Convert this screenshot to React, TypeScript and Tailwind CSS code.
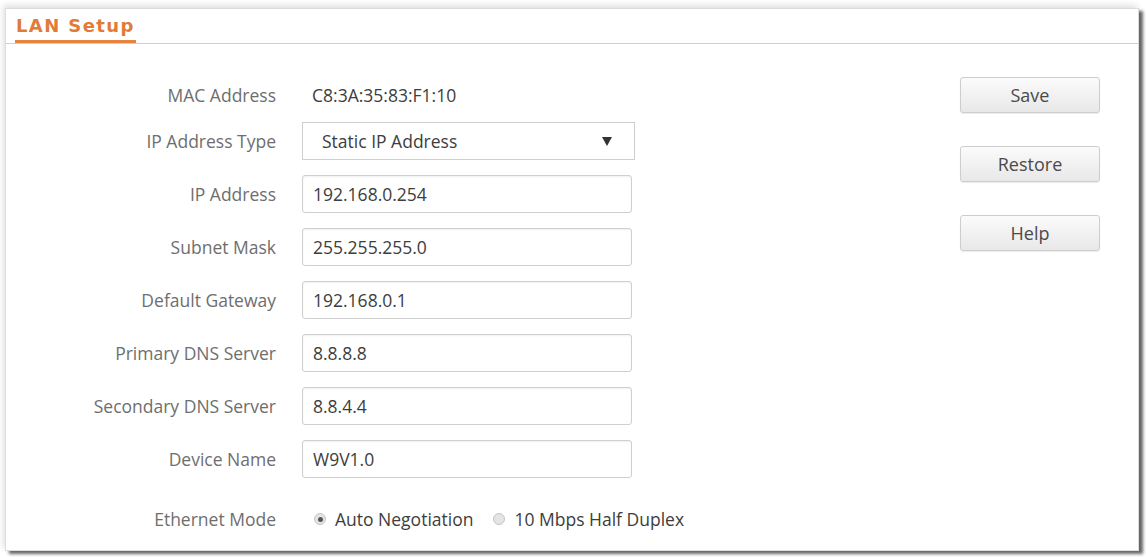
import React from "react";

const font = { fontFamily: '"Open Sans", "Liberation Sans", Arial, sans-serif' };

function Label({ children }: { children: React.ReactNode }) {
  return (
    <div className="w-[270px] shrink-0 text-right text-[17.5px] text-[#6e6e6e]">{children}</div>
  );
}

function InputRow({ label, value }: { label: string; value: string }) {
  return (
    <div className="flex items-center h-[38px] gap-x-[26px]">
      <Label>{label}</Label>
      <div className="w-[330px] h-[38px] border border-[#cfcfcf] rounded-[3px] bg-white flex items-center px-[10px] text-[17.5px] text-[#3d3d3d] shadow-[inset_0_1px_2px_rgba(0,0,0,0.06)]">
        {value}
      </div>
    </div>
  );
}

function Radio({ checked }: { checked: boolean }) {
  return (
    <span className="w-[12px] h-[12px] rounded-full border border-[#c4c4c4] bg-[#e4e4e4] flex items-center justify-center shrink-0">
      {checked ? <span className="w-[5px] h-[5px] rounded-full bg-[#555]" /> : null}
    </span>
  );
}

function Btn({ children }: { children: React.ReactNode }) {
  return (
    <div className="w-[140px] h-[36px] rounded-[3px] border border-[#cdcdcd] bg-gradient-to-b from-[#fbfbfb] to-[#e8e8e8] flex items-center justify-center text-[18px] text-[#4a4a4a] shadow-[0_1px_1px_rgba(0,0,0,0.08)]">
      {children}
    </div>
  );
}

export default function App() {
  return (
    <div className="w-[1146px] h-[557px] bg-white pt-[8px] pl-[5px] pr-[7px] pb-[6px]" style={font}>
      <div className="h-full border border-[#dcdcdc] bg-white flex flex-col shadow-[4px_3px_3px_rgba(0,0,0,0.6),-2px_-3px_6px_rgba(0,0,0,0.12)]">
        <div className="h-[35px] shrink-0 border-b border-[#cfcfcf] pl-[9px] flex items-end">
          <span
            className="border-b-[3px] border-[#e8823f] text-[#e07b39] font-bold text-[18px] leading-none pb-[5px] px-[1px] tracking-[1.4px]"
            style={{ fontFamily: '"DejaVu Sans", Verdana, sans-serif' }}
          >
            LAN Setup
          </span>
        </div>
        <div className="flex flex-1">
          <div className="flex flex-col pt-[39px]">
            <div className="flex items-center h-[24px] gap-x-[26px]">
              <Label>MAC Address</Label>
              <div className="text-[17.5px] text-[#3d3d3d] pl-[10px]">C8:3A:35:83:F1:10</div>
            </div>
            <div className="flex items-center h-[38px] gap-x-[26px] mt-[15px]">
              <Label>IP Address Type</Label>
              <div className="w-[333px] h-[38px] border border-[#cfcfcf] bg-white flex items-center justify-between pl-[19px] pr-[22px] text-[17.5px] text-[#3d3d3d]">
                <span>Static IP Address</span>
                <svg width="10" height="9" viewBox="0 0 10 9">
                  <path d="M0 0 L10 0 L5 9 Z" fill="#333" />
                </svg>
              </div>
            </div>
            <div className="flex flex-col gap-y-[15px] mt-[15px]">
              <InputRow label="IP Address" value="192.168.0.254" />
              <InputRow label="Subnet Mask" value="255.255.255.0" />
              <InputRow label="Default Gateway" value="192.168.0.1" />
              <InputRow label="Primary DNS Server" value="8.8.8.8" />
              <InputRow label="Secondary DNS Server" value="8.8.4.4" />
              <InputRow label="Device Name" value="W9V1.0" />
            </div>
            <div className="flex items-center h-[24px] gap-x-[26px] mt-[29px]">
              <Label>Ethernet Mode</Label>
              <div className="flex items-center text-[17.5px] text-[#3d3d3d] pl-[12px]">
                <Radio checked />
                <span className="ml-[9px]">Auto Negotiation</span>
                <span className="ml-[20px]"><Radio checked={false} /></span>
                <span className="ml-[9px]">10 Mbps Half Duplex</span>
              </div>
            </div>
          </div>
          <div className="ml-auto mr-[38px] pt-[33px] flex flex-col gap-y-[33px]">
            <Btn>Save</Btn>
            <Btn>Restore</Btn>
            <Btn>Help</Btn>
          </div>
        </div>
      </div>
    </div>
  );
}
